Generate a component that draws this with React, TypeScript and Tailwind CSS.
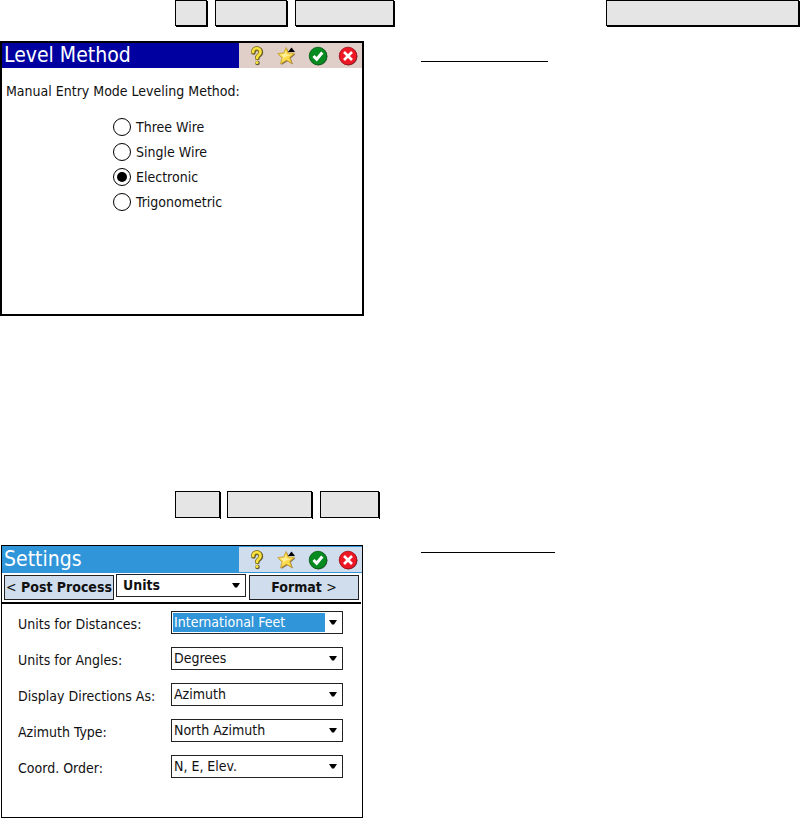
import { useState } from "react";

function HelpIcon() {
  return (
    <svg width="20" height="20" viewBox="0 0 20 20" aria-hidden="true">
      <g fill="none" strokeLinecap="round" strokeLinejoin="round">
        <path d="M6.500 6.500C6.500 1.500 14 1.500 14 6.500C14 9.500 10.500 9 10.500 12" stroke="#5d5735" strokeWidth="4.500" />
        <path d="M6 6C6 1 13.500 1 13.500 6C13.500 9 10 9 10 12" stroke="#8a7416" strokeWidth="4" />
        <path d="M6 6C6 1 13.500 1 13.500 6C13.500 9 10 9 10 12" stroke="#f8e341" strokeWidth="2.600" />
      </g>
      <circle cx="10.500" cy="17" r="2.300" fill="#5d5735" />
      <circle cx="10" cy="16.500" r="1.600" fill="#f8e341" />
    </svg>
  );
}

function StarIcon() {
  return (
    <svg width="20" height="20" viewBox="0 0 20 20" aria-hidden="true">
      <path d="M10 2.500L12.300 8L18.500 8.300L13.800 12.300L16 18.500L10.500 15.300L4.500 19L6 12.500L1.500 8.500L7.500 8Z" fill="#7d6d55" />
      <path d="M9 1.500L11.300 7L17.500 7.300L12.800 11.500L15 17.500L9.500 14.300L3.500 18L5 11.800L.800 7.500L6.800 7Z" fill="#fbd948" stroke="#c79b27" strokeWidth=".8" />
      <path d="M8.500 4.500L9.500 8.500L14 9L8 11L5 15L6.500 11L3 8.500L7.500 8Z" fill="#fff09a" />
      <path d="M11 6L14.500 1.500L18 6Z" fill="#000" />
    </svg>
  );
}

function AcceptIcon() {
  return (
    <svg width="20" height="20" viewBox="0 0 20 20" aria-hidden="true">
      <circle cx="10.500" cy="10.500" r="9" fill="#4b5949" />
      <circle cx="10" cy="10" r="8.800" fill="#078a20" stroke="#075f17" strokeWidth=".8" />
      <path d="M5.500 10L8.700 13.300L14.300 6.500" fill="none" stroke="#fff" strokeWidth="3" />
    </svg>
  );
}

function CloseIcon() {
  return (
    <svg width="20" height="20" viewBox="0 0 20 20" aria-hidden="true">
      <circle cx="10.500" cy="10.500" r="9" fill="#6b4444" />
      <circle cx="10" cy="10" r="8.800" fill="#ee1726" stroke="#a20e18" strokeWidth=".8" />
      <path d="M6 6L14 14M14 6L6 14" fill="none" stroke="#fff" strokeWidth="2.600" />
    </svg>
  );
}

function TitleBar({ title, bar, tools }: { title: string; bar: string; tools: string }) {
  return (
    <header className={`flex ${bar}`}>
      <h2 className="flex-1 pl-0.5 text-[21px] leading-[25px] text-white">{title}</h2>
      <div className={`flex w-[123px] items-center justify-between pr-1 pl-2 ${tools}`}>
        <button type="button" aria-label="Help"><HelpIcon /></button>
        <button type="button" aria-label="Favorites"><StarIcon /></button>
        <button type="button" aria-label="Accept"><AcceptIcon /></button>
        <button type="button" aria-label="Close"><CloseIcon /></button>
      </div>
    </header>
  );
}

function Arrow() {
  return (
    <span className="pointer-events-none absolute inset-y-px right-px flex w-4 items-center justify-center bg-white">
      <svg width="8" height="5" viewBox="0 0 8 5" aria-hidden="true">
        <path d="M0 0H8L5 4.500H3Z" fill="#000" />
      </svg>
    </span>
  );
}

function Field({ id, label, value, active }: { id: string; label: string; value: string; active?: boolean }) {
  return (
    <div className="flex h-[23px]">
      <label htmlFor={id} className="w-[153px] pt-0.5 leading-[22px]">{label}</label>
      <div className="relative w-[172px] border border-[#222] p-px">
        <select
          id={id}
          className={`block h-[19px] w-full appearance-none pl-px leading-[19px] outline-none ${active ? "bg-[#3195d9] text-white" : "bg-white"}`}
        >
          <option>{value}</option>
        </select>
        <Arrow />
      </div>
    </div>
  );
}

const methods = ["Three Wire", "Single Wire", "Electronic", "Trigonometric"];

const fields = [
  { id: "distances", label: "Units for Distances:", value: "International Feet", active: true },
  { id: "angles", label: "Units for Angles:", value: "Degrees" },
  { id: "directions", label: "Display Directions As:", value: "Azimuth" },
  { id: "azimuth", label: "Azimuth Type:", value: "North Azimuth" },
  { id: "order", label: "Coord. Order:", value: "N, E, Elev." },
];

const raised = "h-[26px] border border-black bg-[#e5e5e5] shadow-[1px_1px_0_#000]";

const tab = "mt-px h-[25px] w-[110px] border border-[#222] bg-[#cfdded] whitespace-nowrap";

function Key({ width }: { width: string }) {
  return (
    <div className="flex">
      <div className={`h-[27px] border border-black bg-[#e5e5e5] ${width}`} />
      <div className="mt-px h-[27px] w-px bg-black" />
    </div>
  );
}

export default function App() {
  const [method, setMethod] = useState("Electronic");
  return (
    <main className="overflow-x-hidden bg-white font-['DejaVu_Sans_Condensed','DejaVu_Sans',sans-serif] text-[14px] text-[#111]">
      <div className="flex gap-2 pr-px pl-[175px]">
        <div className={`w-8 ${raised}`} />
        <div className={`w-[72px] ${raised}`} />
        <div className={`w-[99px] ${raised}`} />
        <div className={`ml-[204px] w-[193px] ${raised}`} />
      </div>

      <section className="mt-[15px] flex">
        <div className="w-[421px]">
          <div className="h-[275px] w-[364px] border-2 border-black">
            <TitleBar title="Level Method" bar="bg-[#0000a0]" tools="bg-[#dfcfc8]" />
            <fieldset className="pl-1">
              <legend className="pt-3 leading-[22px]">Manual Entry Mode Leveling Method:</legend>
              <div className="mt-3 pl-[107px]">
                {methods.map((name) => (
                  <label key={name} className="flex h-[25px] items-center gap-[5px]">
                    <input
                      type="radio"
                      name="method"
                      checked={method === name}
                      onChange={() => setMethod(name)}
                      className="size-[18px] appearance-none rounded-full border border-black bg-clip-content p-[3px] checked:bg-black"
                    />
                    <span className="pt-0.5">{name}</span>
                  </label>
                ))}
              </div>
            </fieldset>
          </div>
        </div>
        <div className="mt-5 h-px w-[127px] bg-black" />
      </section>

      <div className="mt-[175px] flex pl-[175px]">
        <Key width="w-[45px]" />
        <div className="w-1.5" />
        <Key width="w-[85px]" />
        <div className="w-[7px]" />
        <Key width="w-[59px]" />
      </div>

      <section className="mt-[26px] flex">
        <div className="w-[421px] pl-px">
          <div className="h-[273px] w-[362px] border border-black">
            <TitleBar title="Settings" bar="bg-[#3195d9] py-px" tools="bg-[#cfdded]" />
            <nav className="flex items-start pt-px pr-[3px] pl-0.5 font-bold">
              <button type="button" className={tab}><span className="font-normal">&lt;</span> Post Process</button>
              <div className="relative mr-[3px] ml-0.5 flex-1 border border-[#222] p-px">
                <select aria-label="Settings page" className="block h-[19px] w-full appearance-none bg-white pl-[5px] leading-[19px] outline-none">
                  <option>Units</option>
                </select>
                <Arrow />
              </div>
              <button type="button" className={tab}>Format <span className="font-normal">&gt;</span></button>
            </nav>
            <hr className="mt-0.5 mr-px border-t-2 border-black" />
            <form className="flex flex-col gap-[13px] pt-[7px] pl-4">
              {fields.map((field) => (
                <Field key={field.id} {...field} />
              ))}
            </form>
          </div>
        </div>
        <div className="mt-[7px] h-px w-[134px] bg-black" />
      </section>
    </main>
  );
}
